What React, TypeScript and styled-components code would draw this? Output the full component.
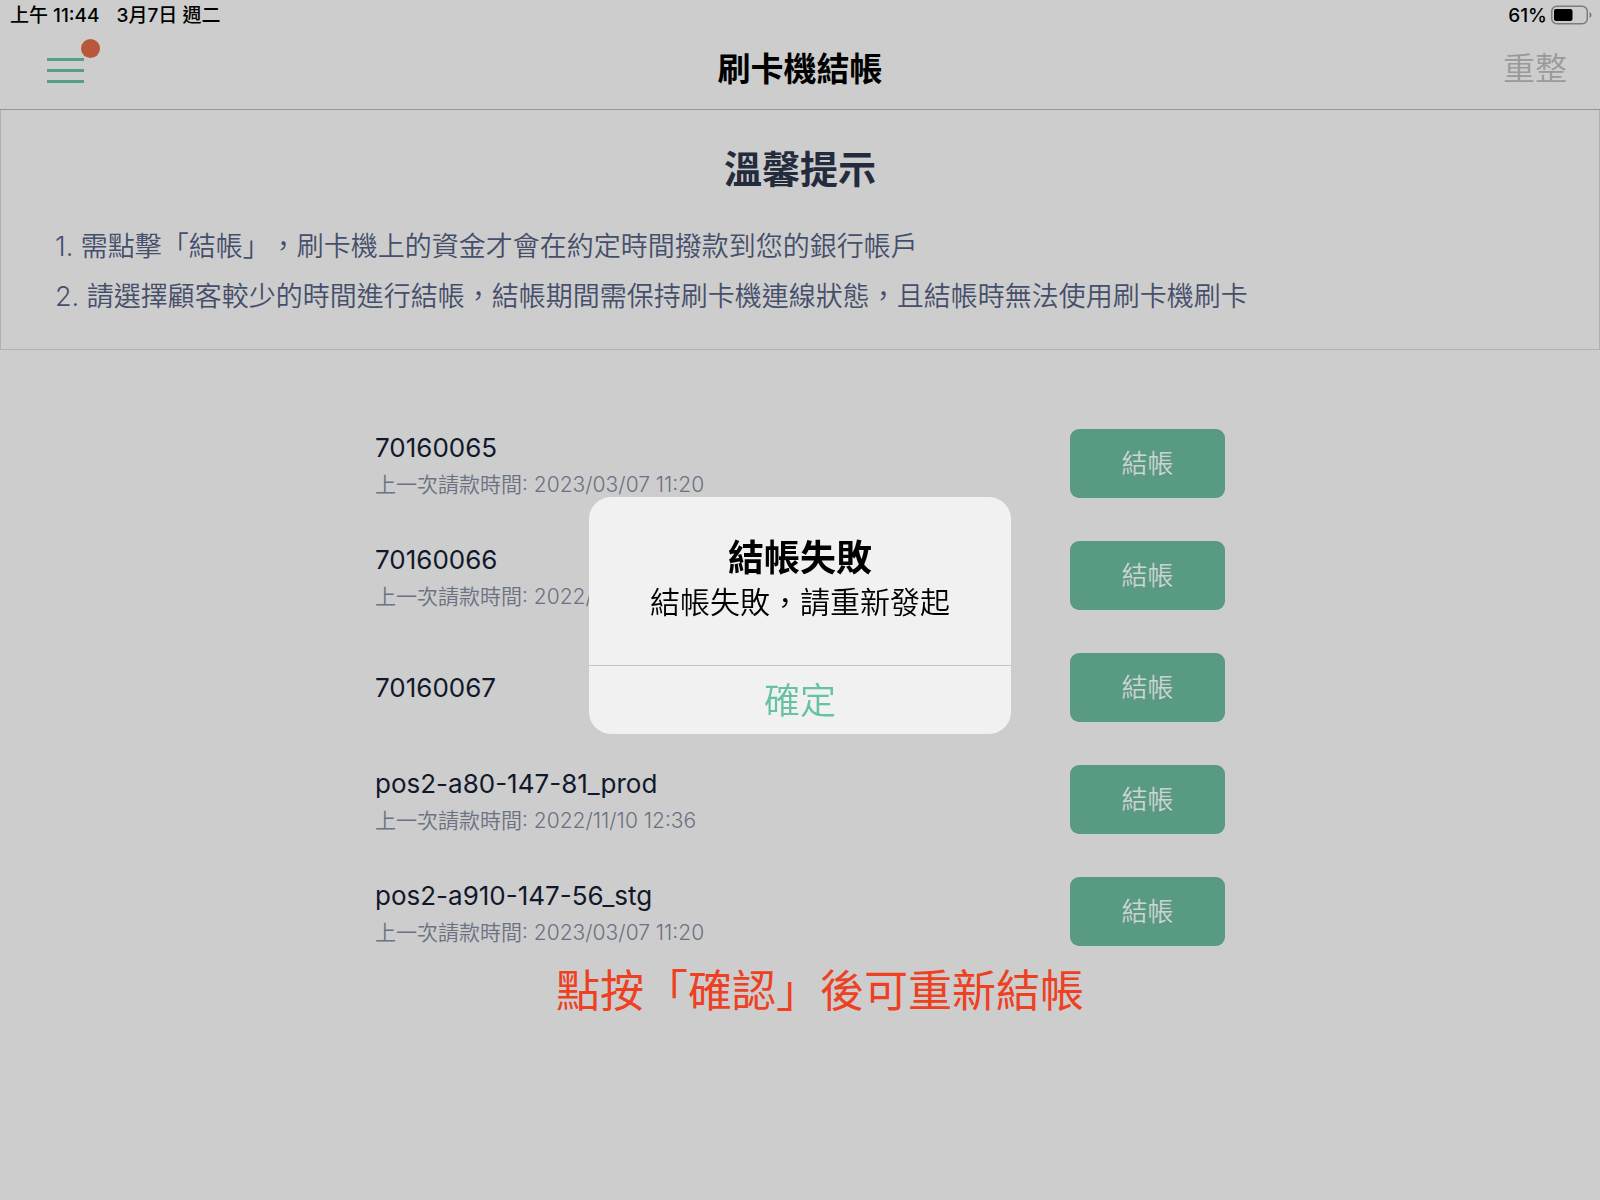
import React from 'react';
import styled, { createGlobalStyle } from 'styled-components';

const colors = {
  page: '#cdcdcd',
  ink: '#000000',
  heading: '#242b3d',
  body: '#454f6b',
  name: '#12182b',
  muted: '#6a7183',
  disabled: '#9a9a9a',
  line: '#94979a',
  panelLine: '#adb1b8',
  green: '#589b82',
  accent: '#66c2a3',
  badge: '#b9573a',
  note: '#ee4023',
};

const GlobalStyle = createGlobalStyle`
  * {
    box-sizing: border-box;
  }

  body {
    margin: 0;
    background: ${colors.page};
    font-family: Inter, 'Noto Sans CJK TC', sans-serif;
    font-weight: 350;
    text-spacing-trim: space-all;
  }

  h1, h2, p, ol, ul {
    margin: 0;
    padding: 0;
  }

  ol, ul {
    list-style: none;
  }

  button {
    font-family: inherit;
    font-weight: inherit;
    border: 0;
    padding: 0;
    background: none;
    cursor: pointer;
  }
`;

const Screen = styled.div`
  display: flex;
  flex-direction: column;
  min-height: 100vh;
  color: ${colors.ink};
`;

const StatusBar = styled.div`
  display: flex;
  align-items: center;
  justify-content: space-between;
  height: 30px;
  padding: 0 8px 0 10px;
`;

const StatusGroup = styled.div<{ $gap: number }>`
  display: flex;
  align-items: center;
  gap: ${({ $gap }) => $gap}px;
`;

const StatusText = styled.span`
  padding-top: 2px;
  font-size: 19px;
  line-height: 28px;
  font-weight: 450;
`;

const NavBar = styled.header`
  display: grid;
  grid-template-columns: 1fr auto 1fr;
  align-items: center;
  height: 80px;
  padding: 0 33px 2px;
  border-bottom: 1px solid ${colors.line};
`;

const MenuButton = styled.button`
  position: relative;
  display: flex;
  width: 38px;
  height: 30px;
  margin-left: 13px;
  padding-top: 2px;
  justify-self: start;
  align-items: center;
`;

const MenuBadge = styled.span`
  position: absolute;
  top: -15px;
  right: -16px;
  width: 19px;
  height: 19px;
  border-radius: 50%;
  background: ${colors.badge};
`;

const PageTitle = styled.h1`
  font-size: 33px;
  line-height: 40px;
  font-weight: 600;
`;

const RefreshButton = styled.button`
  justify-self: end;
  color: ${colors.disabled};
  font-size: 32px;
  line-height: 40px;
`;

const TipsPanel = styled.section`
  padding: 34px 54px 27px;
  border: 1px solid ${colors.panelLine};
  border-top: 0;
`;

const TipsTitle = styled.h2`
  color: ${colors.heading};
  font-size: 38px;
  line-height: 50px;
  font-weight: 600;
  text-align: center;
`;

const TipsList = styled.ol`
  padding-top: 28px;
  color: ${colors.body};
  font-size: 27px;
  line-height: 50px;
`;

const TerminalList = styled.ul`
  display: flex;
  flex-direction: column;
  gap: 38px;
  width: 100%;
  max-width: 850px;
  margin: 79px auto 0;
`;

const TerminalRow = styled.li`
  display: flex;
  align-items: flex-start;
  justify-content: space-between;
  min-height: 74px;
`;

const TerminalDetails = styled.div`
  display: flex;
  flex-direction: column;
  justify-content: center;
  min-height: 69px;
`;

const TerminalName = styled.p`
  color: ${colors.name};
  font-size: 26px;
  line-height: 38px;
  font-weight: 400;
`;

const TerminalTime = styled.p`
  color: ${colors.muted};
  font-size: 21px;
  line-height: 36px;
`;

const SettleButton = styled.button`
  width: 155px;
  height: 69px;
  border-radius: 9px;
  background: ${colors.green};
  color: #cfd3d1;
  font-size: 26px;
  line-height: 40px;
`;

const Note = styled.p`
  padding: 10px 0 0 40px;
  color: ${colors.note};
  font-size: 44px;
  line-height: 60px;
  font-weight: 400;
  text-align: center;
`;

const Overlay = styled.div`
  position: fixed;
  inset: 0;
  display: grid;
  place-items: center;
  padding-top: 31px;
`;

const Alert = styled.div`
  width: 422px;
  overflow: hidden;
  border-radius: 22px;
  background: #f1f1f1;
  text-align: center;
`;

const AlertBody = styled.div`
  padding: 37px 20px 43px;
`;

const AlertTitle = styled.h2`
  font-size: 36px;
  line-height: 48px;
  font-weight: 600;
`;

const AlertMessage = styled.p`
  font-size: 30px;
  line-height: 40px;
`;

const AlertAction = styled.button`
  width: 100%;
  height: 69px;
  padding-top: 2px;
  border-top: 1px solid #c4c4c4;
  color: ${colors.accent};
  font-size: 36px;
  line-height: 48px;
`;

const tips = [
  '需點擊「結帳」，刷卡機上的資金才會在約定時間撥款到您的銀行帳戶',
  '請選擇顧客較少的時間進行結帳，結帳期間需保持刷卡機連線狀態，且結帳時無法使用刷卡機刷卡',
];

const terminals: { name: string; lastTime?: string }[] = [
  { name: '70160065', lastTime: '2023/03/07 11:20' },
  { name: '70160066', lastTime: '2022/11/10 12:36' },
  { name: '70160067' },
  { name: 'pos2-a80-147-81_prod', lastTime: '2022/11/10 12:36' },
  { name: 'pos2-a910-147-56_stg', lastTime: '2023/03/07 11:20' },
];

const MenuIcon = () => (
  <svg width="38" height="28" viewBox="0 0 38 28" aria-hidden="true">
    <path d="M1 3.5H38M1 14.5H38M1 25.5H38" stroke="#549f85" strokeWidth="3" />
  </svg>
);

const BatteryIcon = () => (
  <svg width="41" height="20" viewBox="0 0 41 20" aria-hidden="true">
    <rect x="0.75" y="1.25" width="35.5" height="17.5" rx="5" fill="none" stroke="#7c7c7c" strokeWidth="1.5" />
    <rect x="3" y="4" width="18.500" height="12" rx="2" fill="#000" />
    <path d="M38.500 7v6c1.400-.5 2-1.700 2-3s-.6-2.500-2-3z" fill="#7c7c7c" />
  </svg>
);

export default function App() {
  return (
    <>
      <GlobalStyle />
      <Screen lang="zh-Hant">
        <StatusBar>
          <StatusGroup $gap={17}>
            <StatusText>上午 11:44</StatusText>
            <StatusText>3月7日 週二</StatusText>
          </StatusGroup>
          <StatusGroup $gap={4}>
            <StatusText>61%</StatusText>
            <BatteryIcon />
          </StatusGroup>
        </StatusBar>
        <NavBar>
          <MenuButton type="button" aria-label="選單">
            <MenuIcon />
            <MenuBadge />
          </MenuButton>
          <PageTitle>刷卡機結帳</PageTitle>
          <RefreshButton type="button" disabled>
            重整
          </RefreshButton>
        </NavBar>
        <main>
          <TipsPanel>
            <TipsTitle>溫馨提示</TipsTitle>
            <TipsList>
              {tips.map((tip, index) => (
                <li key={tip}>{`${index + 1}. ${tip}`}</li>
              ))}
            </TipsList>
          </TipsPanel>
          <TerminalList>
            {terminals.map(({ name, lastTime }) => (
              <TerminalRow key={name}>
                <TerminalDetails>
                  <TerminalName>{name}</TerminalName>
                  {lastTime && <TerminalTime>{`上一次請款時間: ${lastTime}`}</TerminalTime>}
                </TerminalDetails>
                <SettleButton type="button">結帳</SettleButton>
              </TerminalRow>
            ))}
          </TerminalList>
          <Note>點按「確認」後可重新結帳</Note>
        </main>
      </Screen>
      <Overlay lang="zh-Hant">
        <Alert role="alertdialog" aria-modal="true" aria-labelledby="alert-title" aria-describedby="alert-message">
          <AlertBody>
            <AlertTitle id="alert-title">結帳失敗</AlertTitle>
            <AlertMessage id="alert-message">結帳失敗，請重新發起</AlertMessage>
          </AlertBody>
          <AlertAction type="button">確定</AlertAction>
        </Alert>
      </Overlay>
    </>
  );
}
